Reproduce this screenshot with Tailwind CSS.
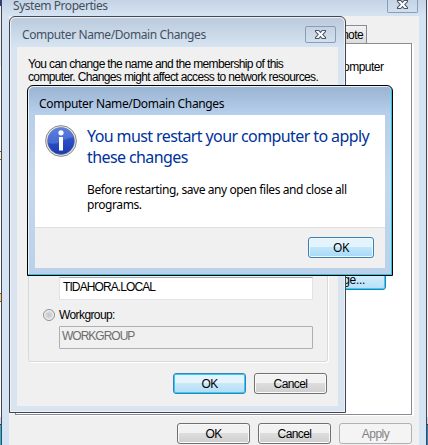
<!DOCTYPE html>
<html lang="en">
<head>
<meta charset="utf-8">
<title>System Properties</title>
<script src="https://cdn.jsdelivr.net/npm/@tailwindcss/browser@4"></script>
</head>
<body class="relative w-[428px] h-[445px] overflow-hidden bg-white font-['Liberation_Sans',Arial,sans-serif] text-[12px] tracking-[-0.6px] leading-[13px] text-black">
  <!-- desktop slivers behind the windows -->
  <div class="absolute inset-y-0 left-0 w-[2px] flex flex-col">
    <div class="h-[6px] bg-[#2b3a9c]"></div>
    <div class="h-[60px] bg-[#eef2f8]"></div>
    <div class="h-[85px]"></div>
    <div class="h-[9px] border-y border-[#a04a20] bg-[#fff3cc]"></div>
    <div class="h-[133px]"></div>
    <div class="h-[9px] border-y border-[#a04a20] bg-[#ffd27a]"></div>
    <div class="h-[115px]"></div>
    <div class="h-[7px] bg-[#c8d8e6]"></div>
    <div class="grow bg-[#25b5dc] border-t border-[#333]"></div>
  </div>
  <div class="absolute inset-y-0 right-0 w-[2px] flex flex-col">
    <div class="h-[417px] bg-[#f4f4f4]"></div>
    <div class="h-[7px] bg-[#d0d0d0]"></div>
    <div class="grow bg-[#2384c4] border-t border-[#333]"></div>
  </div>

  <!-- System Properties -->
  <section class="absolute left-[1px] top-0 w-[426px] h-[445px] border-x border-[#44454f] bg-[#d6e3f2] px-[7px] flex flex-col">
    <header class="h-[16px] -mx-[7px] pl-[11px] pr-[8px] flex justify-between bg-linear-to-b from-[#c5d4e5] to-[#d5e3f2]">
      <h1 class="font-['Noto_Sans','Open_Sans',sans-serif] text-[12px] leading-[11px] text-[#45505f] whitespace-nowrap tracking-[-0.45px]">System Properties</h1>
      <div class="w-[31px] h-[13px] border border-t-0 border-[#8e9bb8] rounded-b-[2px] flex justify-center">
        <svg class="w-[13px] h-[11px] -mt-[1px]" viewBox="0 0 13 11"><path d="M1.500 1.500H4.800L6.500 3.400 8.200 1.500H11.500V2.500L8.800 5.500 11.500 8.500V9.500H8.200L6.500 7.600 4.800 9.500H1.500V8.500L4.200 5.500 1.500 2.500Z" fill="#fff" stroke="#4e5666" stroke-width="1.100"/></svg>
      </div>
    </header>
    <div class="h-[429px] bg-[#f0f0f0] pl-[6px] pr-[7px] pt-[9px] flex flex-col">
      <div class="h-[18px] flex">
        <div class="w-[352px] border-t border-r border-[#898c95] bg-linear-to-b from-[#f2f2f2] to-[#dcdcdc] text-right pr-[3px] pt-[3px]">Remote</div>
      </div>
      <div class="w-[397px] h-[372px] border border-[#898c95] bg-white pt-[17px] pl-[327px] flex flex-col shadow-[2px_1px_0_#fff]">
        <p class="w-[60px] text-nowrap tracking-[-0.5px]">omputer</p>
        <div class="mt-[198px] -ml-[15px] w-[58px] h-[18px] rounded-[3px] border border-[#2f7fae] bg-linear-to-b from-[#d9f0fc] to-[#b5e0f8] shadow-[inset_0_0_0_1px_#2fd0fa] text-right pr-[20px] pt-[1px] tracking-[-0.3px]">ge...</div>
      </div>
      <div class="flex gap-[8px] ml-[162px] mt-[8px] text-center leading-[20px]">
        <button class="w-[73px] h-[21px] shrink-0 rounded-[3px] border border-[#707070] shadow-[inset_0_0_0_1px_#fafafa] bg-linear-to-b from-[#f2f2f2] from-45% via-[#dddddd] via-50% to-[#cfcfcf]">OK</button>
        <button class="w-[73px] h-[21px] shrink-0 rounded-[3px] border border-[#707070] shadow-[inset_0_0_0_1px_#fafafa] bg-linear-to-b from-[#f2f2f2] from-45% via-[#dddddd] via-50% to-[#cfcfcf]">Cancel</button>
        <button class="w-[73px] h-[21px] shrink-0 rounded-[3px] border border-[#adb2b5] bg-[#f4f4f4] text-[#838383] tracking-[-0.5px]">Apply</button>
      </div>
    </div>
  </section>

  <!-- Computer Name/Domain Changes -->
  <section class="absolute left-[9px] top-[16px] w-[337px] h-[397px] rounded-t-[6px] border border-[#44454f] bg-[#d8e4f0] shadow-[inset_0_0_0_1px_#eef0f8] px-[7px] flex flex-col">
    <header class="h-[29px] -mx-[6px] mt-px pl-[11px] pr-[8px] pt-[8px] rounded-t-[5px] flex justify-between bg-linear-to-b from-[#bccbdd] to-[#d6e4f2]">
      <h2 class="font-['Noto_Sans','Open_Sans',sans-serif] text-[12px] leading-[18px] text-[#45505f] whitespace-nowrap tracking-[-0.4px]">Computer Name/Domain Changes</h2>
      <div class="w-[31px] h-[17px] border border-[#8e9bb8] rounded-[2px] flex items-center justify-center">
        <svg class="w-[13px] h-[11px]" viewBox="0 0 13 11"><path d="M1.500 1.500H4.800L6.500 3.400 8.200 1.500H11.500V2.500L8.800 5.500 11.500 8.500V9.500H8.200L6.500 7.600 4.800 9.500H1.500V8.500L4.200 5.500 1.500 2.500Z" fill="#fff" stroke="#4e5666" stroke-width="1.100"/></svg>
      </div>
    </header>
    <div class="w-[321px] h-[359px] bg-[#f0f0f0] pl-[11px] pt-[11px] flex flex-col">
      <p class="whitespace-nowrap tracking-[-0.64px]">You can change the name and the membership of this<br>computer. Changes might affect access to network resources.</p>
      <div class="mt-[13px] w-[300px] h-[265px] border border-[#d5dade] rounded-[3px] shadow-[1px_1px_0_#fff] pl-[30px] pt-[178px] flex flex-col">
        <div class="w-[254px] h-[23px] mt-px bg-white border border-[#e2e3ea] border-t-[#abadb3] pl-[3px] leading-[18px] tracking-[-0.9px]">TIDAHORA.LOCAL</div>
        <div class="h-[26px] -ml-[16px] pt-[4px] flex items-center gap-[4px]">
          <span class="size-[12px] rounded-full border border-[#8e8f8f] bg-radial from-[#bfc4ca] to-[#f4f4f4] shadow-[inset_0_0_0_1px_#f4f4f4]"></span>
          <span>Workgroup:</span>
        </div>
        <div class="w-[254px] h-[23px] border border-[#afafaf] rounded-[1px] pl-[2px] leading-[18px] text-[#6d6d6d] tracking-[-1px]">WORKGROUP</div>
      </div>
      <div class="flex gap-[8px] ml-[145px] mt-[11px] text-center leading-[20px]">
        <button class="w-[73px] h-[21px] shrink-0 rounded-[3px] border border-[#3c7fb1] shadow-[inset_0_0_0_1px_#2fcdf8] bg-linear-to-b from-[#e5f4fc] from-45% via-[#c9e8f9] via-50% to-[#b0def7]">OK</button>
        <button class="w-[73px] h-[21px] shrink-0 rounded-[3px] border border-[#707070] shadow-[inset_0_0_0_1px_#fafafa] bg-linear-to-b from-[#f2f2f2] from-45% via-[#dddddd] via-50% to-[#cfcfcf]">Cancel</button>
      </div>
    </div>
  </section>

  <!-- Restart prompt -->
  <section class="absolute left-[27px] top-[85px] w-[366px] h-[191px] rounded-t-[6px] border border-black bg-linear-to-b from-[#b3cbe6] via-[#c5d8ed] via-50% to-[#b9d1ea] shadow-[inset_-1px_-1px_0_#25c8e0,inset_1px_1px_0_#e8f2fb] px-[7px] flex flex-col">
    <header class="h-[28px] -mx-[6px] mt-px pl-[10px] pt-[8px] rounded-t-[5px] bg-linear-to-b from-[#9bb4d2] to-[#b7d0ec]">
      <h2 class="font-['Noto_Sans','Open_Sans',sans-serif] text-[12px] leading-[18px] whitespace-nowrap tracking-[-0.35px]">Computer Name/Domain Changes</h2>
    </header>
    <div class="h-[112px] w-[350px] bg-white pl-[10px] pt-[10px] flex gap-[10px]">
      <svg class="size-[32px] shrink-0" viewBox="0 0 32 32">
        <defs>
          <linearGradient id="b" x1="0" y1="0" x2="0" y2="1"><stop offset="0" stop-color="#4a6fd6"/><stop offset=".45" stop-color="#2c50c8"/><stop offset="1" stop-color="#1a39b0"/></linearGradient>
        </defs>
        <circle cx="16" cy="16" r="15.400" fill="#e4e4e4" stroke="#8b8b8b"/>
        <circle cx="16" cy="16" r="13.400" fill="url(#b)" stroke="#5b6a99" stroke-width=".6"/>
        <path d="M3.200 18A12.900 12.900 0 0 1 28.300 12Q22 13 16 16.500T3.200 18Z" fill="#7b9bea" opacity=".4"/>
        <circle cx="16" cy="7.800" r="2.600" fill="#fff"/>
        <path d="M14 12H18V25.500H14Z" fill="#fff"/>
      </svg>
      <div class="font-['Noto_Sans','Open_Sans',sans-serif] whitespace-nowrap pt-px">
        <h3 class="text-[16px] leading-[21px] text-[#003399] tracking-[-0.6px]">You must restart your computer to apply<br>these changes</h3>
        <p class="mt-[14px] text-[12px] leading-[15px] tracking-[-0.42px]">Before restarting, save any open files and close all<br>programs.</p>
      </div>
    </div>
    <footer class="w-[350px] h-[41px] bg-[#f0f0f0] border-t border-[#dfdfdf] flex justify-end pr-[11px] pt-[9px]">
      <button class="w-[66px] h-[21px] rounded-[3px] border border-[#3c7fb1] shadow-[inset_0_0_0_1px_#eef9ff] bg-linear-to-b from-[#e5f4fc] from-45% via-[#bfe6fb] via-50% to-[#a7d9f5] font-['Noto_Sans','Open_Sans',sans-serif] text-[12px] leading-[18px] tracking-[-0.4px]">OK</button>
    </footer>
  </section>
</body>
</html>
